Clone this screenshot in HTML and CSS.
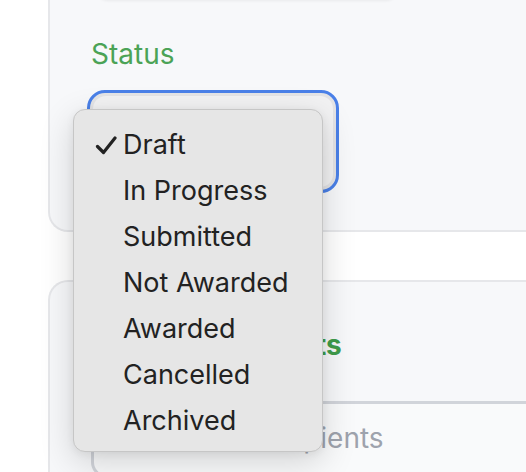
FILE: index.html
```html
<!DOCTYPE html>
<html lang="en">
<head>
<meta charset="utf-8">
<title>Status</title>
<link rel="stylesheet" href="styles.css">
</head>
<body>
<div class="page">
  <section class="card card-status">
    <div class="prev-field"></div>
    <label class="field-label">Status</label>
    <div class="select-box"><div class="select-inner"></div></div>
  </section>
  <section class="card card-recipients">
    <h2 class="section-title">Award Documents</h2>
    <div class="text-input"><span class="placeholder">Search all recipients</span></div>
  </section>
</div>

<ul class="menu">
  <li class="menu-item selected">
    <svg class="check" width="22" height="19" viewBox="0 0 22 19"><path d="M2.5 10.5 L8.5 16.5 L20 2" fill="none" stroke="#222" stroke-width="3.2" stroke-linecap="round" stroke-linejoin="round"/></svg>
    Draft
  </li>
  <li class="menu-item">In Progress</li>
  <li class="menu-item">Submitted</li>
  <li class="menu-item">Not Awarded</li>
  <li class="menu-item">Awarded</li>
  <li class="menu-item">Cancelled</li>
  <li class="menu-item">Archived</li>
</ul>
</body>
</html>
```

FILE: styles.css
```css
* { box-sizing: border-box; }

html, body {
  margin: 0;
  padding: 0;
  background: #ffffff;
  font-family: "Inter", "Liberation Sans", sans-serif;
  overflow: hidden;
}

body {
  width: 526px;
  height: 472px;
  position: relative;
}

.page {
  padding-left: 48px;
  height: 472px;
  overflow: hidden;
}

.card {
  background: #f7f8fa;
  border: 2px solid #e6e7ea;
  border-right: none;
  border-radius: 20px 0 0 20px;
}

.card-status {
  margin-top: -60px;
  padding: 0 0 37px 41px;
}

.prev-field {
  height: 58px;
  width: 300px;
  margin-left: 6px;
  background: #f7f8fa;
  border-radius: 0 0 10px 10px;
  box-shadow: 0 1px 3px rgba(0, 0, 0, 0.06);
}

.field-label {
  display: block;
  margin-top: 37px;
  font-size: 28px;
  line-height: 34px;
  color: #4ba356;
  font-weight: 400;
}

.select-box {
  margin-top: 19px;
  margin-left: -4px;
  width: 252px;
  height: 103px;
  border: 3px solid #4a80e8;
  border-radius: 18px;
  background: #e4e4e6;
  padding: 3px;
}

.select-inner {
  height: 100%;
  border-radius: 13px;
  background: #f2f2f3;
}

.card-recipients {
  margin-top: 48px;
  padding: 46px 0 60px 41px;
}

.section-title {
  margin: 0;
  font-size: 28px;
  line-height: 34px;
  font-weight: 700;
  color: #3f9c4b;
}

.text-input {
  margin-top: 39px;
  border: 3px solid #d1d4da;
  border-right: none;
  border-radius: 16px 0 0 16px;
  background: #f9fafb;
  padding: 17px 0 20px 22px;
}

.placeholder {
  font-size: 28px;
  line-height: 34px;
  color: #9ea3ad;
}

.menu {
  position: absolute;
  left: 73px;
  top: 109px;
  width: 250px;
  height: 343px;
  margin: 0;
  padding: 12px 0 7px 0;
  list-style: none;
  background: #e6e6e6;
  border: 1px solid #c6c6c6;
  border-radius: 12px;
  box-shadow: 0 10px 34px rgba(0, 0, 0, 0.16), 0 2px 8px rgba(0, 0, 0, 0.06);
}

.menu-item {
  position: relative;
  height: 46px;
  line-height: 46px;
  padding-left: 49px;
  font-size: 27px;
  color: #222222;
  white-space: nowrap;
}

.check {
  position: absolute;
  left: 21px;
  top: 14px;
}
```
